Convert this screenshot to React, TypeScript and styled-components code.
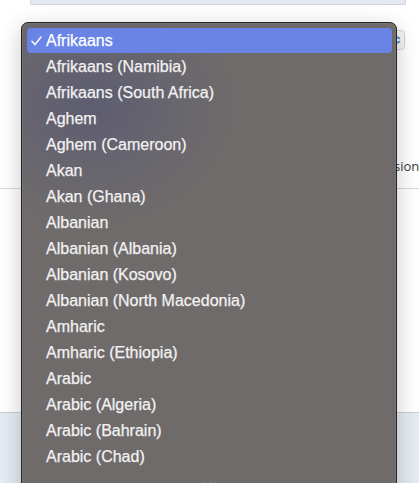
import * as React from 'react';
import styled, { createGlobalStyle } from 'styled-components';

const languages = [
  'Afrikaans',
  'Afrikaans (Namibia)',
  'Afrikaans (South Africa)',
  'Aghem',
  'Aghem (Cameroon)',
  'Akan',
  'Akan (Ghana)',
  'Albanian',
  'Albanian (Albania)',
  'Albanian (Kosovo)',
  'Albanian (North Macedonia)',
  'Amharic',
  'Amharic (Ethiopia)',
  'Arabic',
  'Arabic (Algeria)',
  'Arabic (Bahrain)',
  'Arabic (Chad)',
];

const GlobalStyle = createGlobalStyle`
  html, body {
    margin: 0;
    padding: 0;
    background: #ffffff;
    overflow: hidden;
  }
  body {
    font-family: 'Liberation Sans', Arial, sans-serif;
  }
`;

export default function App() {
  const [selected] = React.useState(0);

  return (
    <>
      <GlobalStyle />
      <Page>
        <TopField />

        <SelectRow>
          <SelectBox>
            <SelectArrow>
              <svg width="6" height="8" viewBox="0 0 6 8">
                <path d="M1 3 L3 1 L5 3 M1 5 L3 7 L5 5" fill="none" stroke="#2f6fd6" strokeWidth="1.2" />
              </svg>
            </SelectArrow>
          </SelectBox>
        </SelectRow>

        <FieldLabelRow>
          <FieldLabel>Permission</FieldLabel>
        </FieldLabelRow>

        <Section />
        <Footer />

        <Menu>
          {languages.map((name, i) => (
            <MenuItem key={name} $active={i === selected}>
              <Check>
                {i === selected ? (
                  <svg width="11" height="10" viewBox="0 0 11 10">
                    <path d="M1 5.2 L4 8.6 L10 1" fill="none" stroke="#ffffff" strokeWidth="1.5" strokeLinecap="round" strokeLinejoin="round" />
                  </svg>
                ) : null}
              </Check>
              {name}
            </MenuItem>
          ))}
          <MoreArrow>
            <svg width="10" height="6" viewBox="0 0 10 6">
              <path d="M1 1 L5 5 L9 1" fill="none" stroke="#ffffff" strokeWidth="1.6" />
            </svg>
          </MoreArrow>
        </Menu>
      </Page>
    </>
  );
}

const Page = styled.div`
  position: relative;
  width: 419px;
  height: 483px;
  overflow: hidden;
  display: flex;
  flex-direction: column;
`;

const TopField = styled.div`
  margin-left: 30px;
  width: 374px;
  height: 4px;
  background: #e5eaf2;
  border: 1px solid #cdd4dd;
  border-top: none;
  border-radius: 0 0 2px 2px;
`;

const SelectRow = styled.div`
  display: flex;
  margin-top: 25px;
  padding-left: 30px;
`;

const SelectBox = styled.div`
  width: 375px;
  height: 20px;
  box-sizing: border-box;
  border: 1px solid #cfd5dd;
  border-radius: 4px;
  background: #f4f6f8;
  display: flex;
  justify-content: flex-end;
  align-items: center;
  padding-right: 3px;
`;

const SelectArrow = styled.span`
  display: flex;
`;

const FieldLabelRow = styled.div`
  display: flex;
  margin-top: 106px;
  padding-left: 352px;
  height: 20px;
  align-items: center;
`;

const FieldLabel = styled.span`
  font-family: 'Open Sans', sans-serif;
  font-size: 13px;
  color: #333a40;
  white-space: nowrap;
`;

const Section = styled.div`
  margin-top: 12px;
  height: 223px;
  border-top: 1px solid #d6d9dd;
  background: #ffffff;
`;

const Footer = styled.div`
  flex: 1;
  border-top: 1px solid #c9cfd6;
  background: #e5ebf2;
`;

const Menu = styled.div`
  position: absolute;
  left: 21px;
  top: 22px;
  width: 376px;
  height: 480px;
  box-sizing: border-box;
  padding: 5px 4px 0 5px;
  border: 1px solid #262424;
  border-radius: 7px;
  background:
    radial-gradient(ellipse 140px 120px at 70px 80px, rgba(72, 76, 120, 0.45), rgba(72, 76, 120, 0) 100%),
    #6f6b6b;
  box-shadow: 0 6px 22px rgba(0, 0, 0, 0.22), inset 0 0 0 1px rgba(255, 255, 255, 0.06);
  display: flex;
  flex-direction: column;
`;

const MenuItem = styled.div<{ $active?: boolean }>`
  display: flex;
  align-items: center;
  height: 25px;
  margin-bottom: 1px;
  border-radius: 4px;
  background: ${(p) => (p.$active ? '#6a84e6' : 'transparent')};
  color: ${(p) => (p.$active ? '#ffffff' : '#f3f2f2')};
  font-size: 16px;
  white-space: nowrap;
  -webkit-text-stroke: 0.25px currentColor;
`;

const Check = styled.span`
  width: 19px;
  padding-left: 4px;
  box-sizing: border-box;
  display: flex;
  align-items: center;
`;

const MoreArrow = styled.div`
  display: flex;
  justify-content: center;
  padding-top: 12px;
  padding-right: 6px;
`;
